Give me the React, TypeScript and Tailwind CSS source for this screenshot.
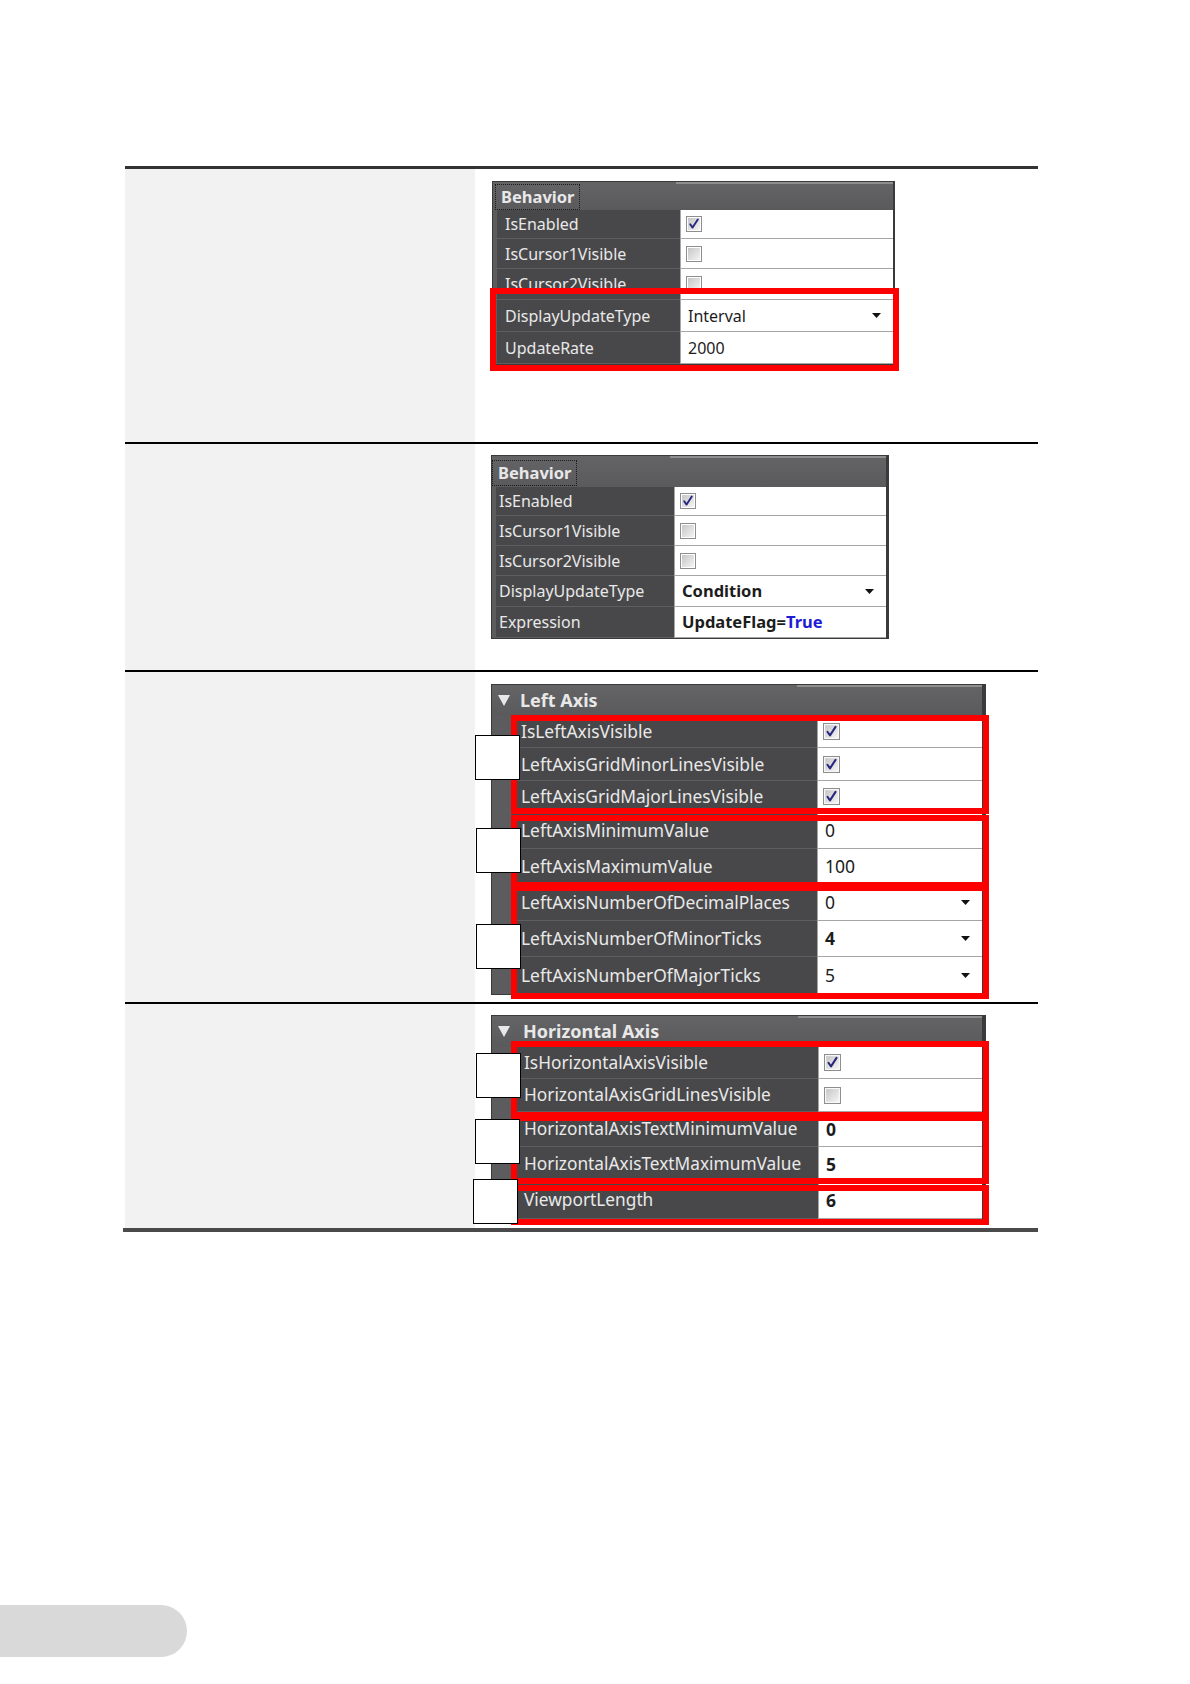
import type { ReactNode } from "react";

type Val =
  | { kind: "check"; on: boolean }
  | { kind: "text"; text: ReactNode; bold?: boolean; drop?: boolean };

type Row = { label: string; h: string; value: Val };

type PanelProps = {
  title: string;
  arrow?: boolean;
  width: string;
  labelW: string;
  gutter: string;
  headerH: string;
  headerPad: string;
  rightBorder: string;
  labelText: string;
  valueText: string;
  check: number;
  rows: Row[];
  red: string[];
  marks: string[];
};

const Check = ({ on, size }: { on: boolean; size: number }) => (
  <svg width={size} height={size} viewBox="0 0 16 16" className="shrink-0">
    <defs>
      <linearGradient id="cb" x1="0" y1="0" x2="1" y2="1">
        <stop offset="0" stopColor="#c6c6c6" />
        <stop offset="1" stopColor="#f4f4f4" />
      </linearGradient>
    </defs>
    <rect x="0.5" y="0.5" width="15" height="15" fill="#fff" stroke="#8e8e8e" />
    <rect x="2" y="2" width="12" height="12" fill="url(#cb)" />
    {on && (
      <path
        d="M4.2 8.2 L6.6 11.6 L11.8 3.6"
        fill="none"
        stroke="#27277f"
        strokeWidth="1.9"
        strokeLinecap="round"
        strokeLinejoin="round"
      />
    )}
  </svg>
);

const DropArrow = () => (
  <svg width="9" height="5" viewBox="0 0 9 5" className="shrink-0">
    <path d="M0 0 H9 L4.5 5 Z" fill="#111" />
  </svg>
);

const Panel = (p: PanelProps) => (
  <div className={`relative ${p.width} bg-[#5c5c5e] border border-[#3a3a3a] ${p.rightBorder}`}>
    <div className={`flex ${p.headerH} bg-gradient-to-b from-[#646466] to-[#5a5a5c]`}>
      <div className={`${p.labelW} flex items-center ${p.headerPad}`}>
        {p.arrow ? (
          <div className="flex items-center">
            <svg width="12" height="11" viewBox="0 0 12 11">
              <path d="M0 0 H12 L6 11 Z" fill="#e8e8e8" />
            </svg>
            <span className="text-[18px] font-bold text-[#e8e8e8]">{p.title}</span>
          </div>
        ) : (
          <span className="mt-[2px] border border-dotted border-[#1a1a1a] px-[5px] text-[16.5px] leading-[24px] font-bold text-[#e8e8e8]">
            {p.title}
          </span>
        )}
      </div>
      <div className="flex-1 border-t-2 border-[#cfcfcf]/40" />
    </div>
    <div className={`${p.gutter} bg-[#5c5c5e]`}>
      {p.rows.map((r) => (
        <div key={r.label} className={`flex ${r.h}`}>
          <div
            className={`${p.labelW} shrink-0 flex items-center bg-[#48484a] border-b border-[#5e5e60] ${p.labelText} text-[#e9e9e9] whitespace-nowrap overflow-hidden`}
          >
            {r.label}
          </div>
          <div className="flex-1 flex items-center bg-white border-b border-l border-[#a6a6a6] pl-[5px] pr-[12px]">
            {r.value.kind === "check" ? (
              <Check on={r.value.on} size={p.check} />
            ) : (
              <>
                <span
                  className={`flex-1 pl-[2px] ${p.valueText} text-[#1c1c1c] ${r.value.bold ? "font-bold" : ""}`}
                >
                  {r.value.text}
                </span>
                {r.value.drop && <DropArrow />}
              </>
            )}
          </div>
        </div>
      ))}
    </div>
    {p.red.map((c) => (
      <div key={c} className={`absolute border-[6px] border-[#ff0000] ${c}`} />
    ))}
    {p.marks.map((c) => (
      <div key={c} className={`absolute w-[45px] h-[45px] bg-white border border-black ${c}`} />
    ))}
  </div>
);

const chk = (on: boolean): Val => ({ kind: "check", on });
const txt = (text: ReactNode, bold = false, drop = false): Val => ({ kind: "text", text, bold, drop });

const panels: PanelProps[] = [
  {
    title: "Behavior",
    width: "w-[403px]",
    labelW: "w-[183px]",
    gutter: "pl-[4px]",
    headerH: "h-[28px]",
    headerPad: "pl-[2px]",
    rightBorder: "border-r-2",
    labelText: "text-[16px] pl-[8px]",
    valueText: "text-[16px]",
    check: 16,
    rows: [
      { label: "IsEnabled", h: "h-[29px]", value: chk(true) },
      { label: "IsCursor1Visible", h: "h-[30px]", value: chk(false) },
      { label: "IsCursor2Visible", h: "h-[31px]", value: chk(false) },
      { label: "DisplayUpdateType", h: "h-[32px]", value: txt("Interval", false, true) },
      { label: "UpdateRate", h: "h-[32px]", value: txt("2000") },
    ],
    red: ["left-[-3px] top-[106px] w-[409px] h-[83px]"],
    marks: [],
  },
  {
    title: "Behavior",
    width: "w-[398px]",
    labelW: "w-[178px]",
    gutter: "pl-[4px]",
    headerH: "h-[31px]",
    headerPad: "pl-0",
    rightBorder: "border-r-[3px]",
    labelText: "text-[16px] pl-[3px]",
    valueText: "text-[16.5px]",
    check: 16,
    rows: [
      { label: "IsEnabled", h: "h-[29px]", value: chk(true) },
      { label: "IsCursor1Visible", h: "h-[30px]", value: chk(false) },
      { label: "IsCursor2Visible", h: "h-[30px]", value: chk(false) },
      { label: "DisplayUpdateType", h: "h-[31px]", value: txt("Condition", true, true) },
      {
        label: "Expression",
        h: "h-[31px]",
        value: txt(
          <>
            UpdateFlag=<span className="text-[#1d1dd6]">True</span>
          </>,
          true,
        ),
      },
    ],
    red: [],
    marks: [],
  },
  {
    title: "Left Axis",
    arrow: true,
    width: "w-[495px]",
    labelW: "w-[305px]",
    gutter: "pl-[20px]",
    headerH: "h-[31px]",
    headerPad: "pl-[6px] [&_span]:ml-[10px]",
    rightBorder: "border-r-[4px]",
    labelText: "text-[17.4px] pl-[9px]",
    valueText: "text-[17.5px]",
    check: 17,
    rows: [
      { label: "IsLeftAxisVisible", h: "h-[32px]", value: chk(true) },
      { label: "LeftAxisGridMinorLinesVisible", h: "h-[33px]", value: chk(true) },
      { label: "LeftAxisGridMajorLinesVisible", h: "h-[32px]", value: chk(true) },
      { label: "LeftAxisMinimumValue", h: "h-[36px]", value: txt("0") },
      { label: "LeftAxisMaximumValue", h: "h-[35px]", value: txt("100") },
      { label: "LeftAxisNumberOfDecimalPlaces", h: "h-[37px]", value: txt("0", false, true) },
      { label: "LeftAxisNumberOfMinorTicks", h: "h-[36px]", value: txt("4", true, true) },
      { label: "LeftAxisNumberOfMajorTicks", h: "h-[37px]", value: txt("5", false, true) },
    ],
    red: [
      "left-[19px] top-[30px] w-[478px] h-[99px]",
      "left-[19px] top-[130px] w-[478px] h-[73px]",
      "left-[19px] top-[200px] w-[478px] h-[114px]",
    ],
    marks: ["left-[-17px] top-[50px]", "left-[-16px] top-[143px]", "left-[-16px] top-[239px]"],
  },
  {
    title: "Horizontal Axis",
    arrow: true,
    width: "w-[495px]",
    labelW: "w-[306px]",
    gutter: "pl-[20px]",
    headerH: "h-[31px]",
    headerPad: "pl-[6px] [&_span]:ml-[13px]",
    rightBorder: "border-r-[4px]",
    labelText: "text-[17.3px] pl-[12px]",
    valueText: "text-[17.5px]",
    check: 17,
    rows: [
      { label: "IsHorizontalAxisVisible", h: "h-[32px]", value: chk(true) },
      { label: "HorizontalAxisGridLinesVisible", h: "h-[33px]", value: chk(false) },
      { label: "HorizontalAxisTextMinimumValue", h: "h-[35px]", value: txt("0", true) },
      { label: "HorizontalAxisTextMaximumValue", h: "h-[35px]", value: txt("5", true) },
      { label: "ViewportLength", h: "h-[37px]", value: txt("6", true) },
    ],
    red: [
      "left-[19px] top-[25px] w-[478px] h-[77px]",
      "left-[19px] top-[99px] w-[478px] h-[69px]",
      "left-[19px] top-[169px] w-[478px] h-[40px]",
    ],
    marks: ["left-[-16px] top-[37px]", "left-[-17px] top-[103px]", "left-[-19px] top-[163px]"],
  },
];

const sections = [
  { h: "h-[273px]", pad: "pl-[17px] pt-[12px]", border: "border-b-2 border-black", p: panels[0] },
  { h: "h-[226px]", pad: "pl-[16px] pt-[11px]", border: "border-b-2 border-black", p: panels[1] },
  { h: "h-[330px]", pad: "pl-[16px] pt-[12px]", border: "border-b-2 border-black", p: panels[2] },
  { h: "h-[224px]", pad: "pl-[16px] pt-[11px]", border: "", p: panels[3] },
];

export default function App() {
  return (
    <div className="relative w-[1190px] h-[1684px] bg-white overflow-hidden font-['Noto_Sans',sans-serif]">
      <div className="pt-[166px] pl-[125px]">
        <div className="w-[913px] border-t-[3px] border-[#333]">
          {sections.map((s, i) => (
            <div key={i} className={`grid grid-cols-[350px_563px] ${s.border}`}>
              <div className={`${s.h} bg-[#f2f2f2]`} />
              <div className={`${s.h} ${s.pad} bg-white`}>
                <Panel {...s.p} />
              </div>
            </div>
          ))}
        </div>
        <div className="ml-[-2px] w-[915px] h-[4px] bg-[#4a4a4a]" />
      </div>
      <div className="absolute left-0 top-[1605px] w-[187px] h-[52px] bg-[#d9d9d9] rounded-r-full" />
    </div>
  );
}
